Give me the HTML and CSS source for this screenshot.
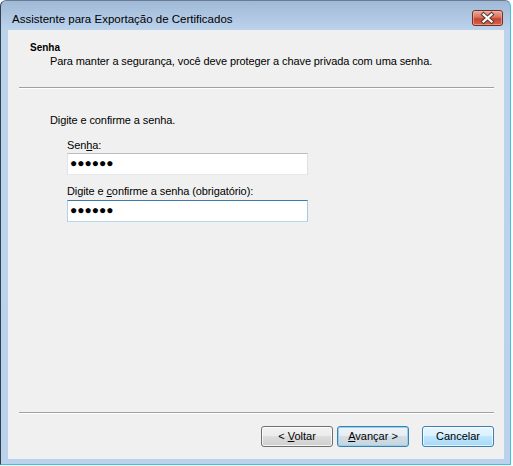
FILE: index.html
```html
<!DOCTYPE html>
<html lang="pt-BR">
<head>
<meta charset="utf-8">
<title>Assistente para Exportação de Certificados</title>
<link rel="stylesheet" href="styles.css">
</head>
<body>
<div class="window">
  <div class="titlebar">
    <span class="title">Assistente para Exportação de Certificados</span>
    <div class="close">
      <svg width="31" height="16" viewBox="0 0 31 16">
        <defs>
          <linearGradient id="cg" x1="0" y1="0" x2="0" y2="1">
            <stop offset="0" stop-color="#eab0a2"/>
            <stop offset="0.45" stop-color="#d8735e"/>
            <stop offset="0.55" stop-color="#c7442e"/>
            <stop offset="1" stop-color="#d6684c"/>
          </linearGradient>
        </defs>
        <rect x="0.5" y="0.5" width="30" height="15" rx="2.5" fill="url(#cg)" stroke="#7a2c22"/>
        <rect x="1.5" y="1.5" width="28" height="13" rx="1.5" fill="none" stroke="#f1b9ab" stroke-opacity="0.6"/>
        <path d="M11.5 4.5 L19.5 11.5 M19.5 4.5 L11.5 11.5" stroke="#5a3a36" stroke-width="4.2" stroke-linecap="square"/>
        <path d="M11.5 4.5 L19.5 11.5 M19.5 4.5 L11.5 11.5" stroke="#ffffff" stroke-width="2.2" stroke-linecap="square"/>
      </svg>
    </div>
  </div>
  <div class="client">
    <div class="header">
      <div class="h-title">Senha</div>
      <div class="h-sub">Para manter a segurança, você deve proteger a chave privada com uma senha.</div>
    </div>
    <div class="sep"></div>
    <div class="content">
      <div class="intro">Digite e confirme a senha.</div>
      <div class="group">
        <div class="label lbl1">Sen<u>h</u>a:</div>
        <div class="field field1">●●●●●●</div>
        <div class="label lbl2">Digite e <u>c</u>onfirme a senha (obrigatório):</div>
        <div class="field field2 focused">●●●●●●</div>
      </div>
    </div>
    <div class="spacer"></div>
    <div class="sep"></div>
    <div class="buttons">
      <div class="btn btn-back">&lt; <u>V</u>oltar</div>
      <div class="btn btn-next default"><u>A</u>vançar &gt;</div>
      <div class="btn btn-cancel hover">Cancelar</div>
    </div>
  </div>
</div>
</body>
</html>
```
FILE: styles.css
```css
html, body {
  margin: 0;
  padding: 0;
  background: #ffffff;
}

body {
  font-family: "Liberation Sans", Arial, sans-serif;
  font-size: 11px;
  color: #000;
}

.window {
  box-sizing: border-box;
  width: 511px;
  height: 465px;
  display: flex;
  flex-direction: column;
  border-top: 1px solid #6a7c92;
  border-left: 1px solid #33414f;
  border-right: 1px solid #3fc3da;
  border-bottom: 1px solid #3fc3da;
  border-radius: 6px 6px 0 0;
  background: linear-gradient(#a0b9d6 0px, #b3cbe6 20px, #bcd3ec 29px, #bad2ec 100%);
  padding: 0 6px 5px 7px;
}

.titlebar {
  height: 29px;
  flex: none;
  display: flex;
  justify-content: space-between;
  align-items: flex-start;
}

.title {
  font-size: 11.5px;
  line-height: 15px;
  margin-top: 11px;
  margin-left: 4px;
  color: #000;
  white-space: nowrap;
}

.close {
  margin-top: 9px;
  margin-right: 1px;
  width: 31px;
  height: 16px;
}

.close svg {
  display: block;
}

.client {
  flex: 1;
  display: flex;
  flex-direction: column;
  background: #f0f0f0;
}

.header {
  padding: 11px 0 0 22px;
}

.h-title {
  font-weight: bold;
  font-size: 10px;
  line-height: 13px;
}

.h-sub {
  margin-top: 1px;
  padding-left: 20px;
  line-height: 13px;
  letter-spacing: -0.1px;
}

.sep {
  flex: none;
  margin: 0 10px 0 11px;
  border-top: 1px solid #a0a0a0;
  border-bottom: 1px solid #ffffff;
}

.header + .sep {
  margin-top: 19px;
}

.content {
  padding-left: 42px;
}

.intro {
  margin-top: 25px;
  line-height: 13px;
  letter-spacing: -0.1px;
}

.group {
  padding-left: 17px;
}

.label {
  line-height: 13px;
  letter-spacing: -0.1px;
}

.lbl1 {
  margin-top: 12px;
}

.lbl2 {
  margin-top: 10px;
}

.field {
  box-sizing: border-box;
  width: 241px;
  height: 22px;
  background: #ffffff;
  border: 1px solid;
  border-color: #b9bbc0 #dde0e6 #e3e9ef #e2e3ea;
  padding-left: 2px;
  font-family: "Liberation Sans", "DejaVu Sans", sans-serif;
  font-size: 12px;
  line-height: 19px;
  color: #000;
}

.field1 {
  margin-top: 1px;
}

.field2 {
  margin-top: 2px;
}

.field.focused {
  border-color: #3d7bad #a4c9e3 #b7d9ed #b5cfe7;
}

.spacer {
  flex: 1;
}

.buttons {
  flex: none;
  display: flex;
  justify-content: flex-end;
  padding: 12px 10px 12px 0;
}

.btn {
  box-sizing: border-box;
  width: 72px;
  height: 21px;
  border: 1px solid #707070;
  border-radius: 3px;
  background: linear-gradient(#f2f2f2 0%, #ebebeb 50%, #dddddd 50%, #cfcfcf 100%);
  box-shadow: inset 0 0 0 1px rgba(255, 255, 255, 0.75);
  text-align: center;
  line-height: 19px;
  font-size: 11px;
  color: #000;
}

.btn-back {
  margin-right: 4px;
}

.btn-next {
  margin-right: 13px;
}

.btn.default {
  border-color: #3c7fb1;
  box-shadow: inset 0 0 0 1px #8fd4f2;
  background: linear-gradient(#eef3f7 0%, #e6ecf1 50%, #d5dde4 50%, #c9d3dc 100%);
}

.btn.hover {
  border-color: #3c7fb1;
  box-shadow: inset 0 0 0 1px rgba(255, 255, 255, 0.7);
  background: linear-gradient(#eaf6fd 0%, #d9f0fc 50%, #bee6fd 50%, #a7d9f5 100%);
}
```
